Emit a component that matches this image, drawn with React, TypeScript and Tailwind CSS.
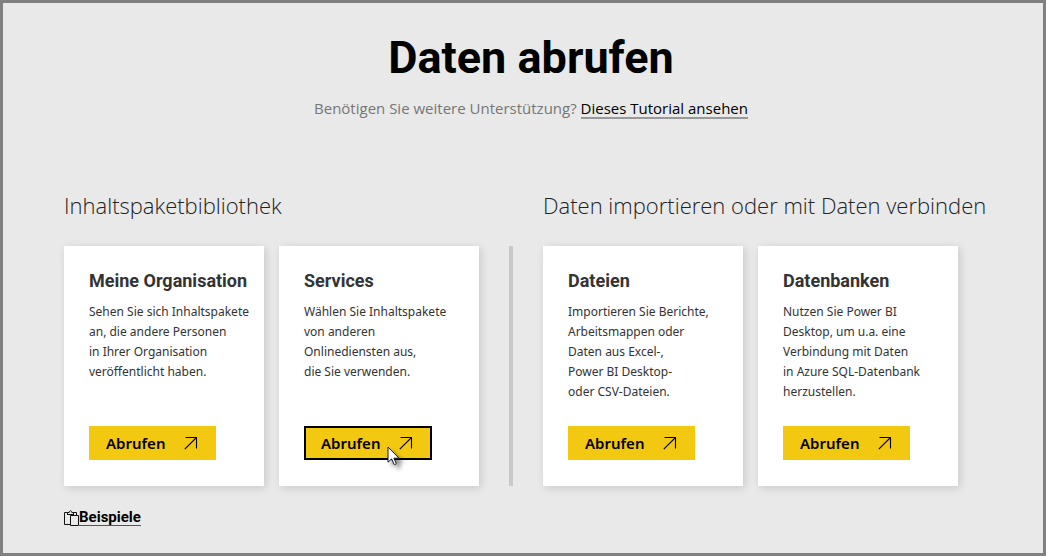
type CardData = {
  title: string;
  lines: string[];
  focused?: boolean;
};

const libraryCards: CardData[] = [
  {
    title: 'Meine Organisation',
    lines: ['Sehen Sie sich Inhaltspakete', 'an, die andere Personen', 'in Ihrer Organisation', 'veröffentlicht haben.'],
  },
  {
    title: 'Services',
    lines: ['Wählen Sie Inhaltspakete', 'von anderen', 'Onlinediensten aus,', 'die Sie verwenden.'],
    focused: true,
  },
];

const importCards: CardData[] = [
  {
    title: 'Dateien',
    lines: ['Importieren Sie Berichte,', 'Arbeitsmappen oder', 'Daten aus Excel-,', 'Power BI Desktop-', 'oder CSV-Dateien.'],
  },
  {
    title: 'Datenbanken',
    lines: ['Nutzen Sie Power BI', 'Desktop, um u.a. eine', 'Verbindung mit Daten', 'in Azure SQL-Datenbank', 'herzustellen.'],
  },
];

function ArrowIcon() {
  return (
    <svg width="14" height="14" viewBox="0 0 14 14" fill="none" stroke="#000" strokeWidth="1.1" aria-hidden="true">
      <path d="M1.5 1.5H12.5V12.5M12.5 1.5L0.8 13.2" />
    </svg>
  );
}

function ClipboardIcon() {
  return (
    <svg width="15" height="16" viewBox="0 0 15 16" fill="none" stroke="#111" aria-hidden="true">
      <path d="M6.5 14.5H0.5V2.5H3.5M9.5 2.5H12.5V5.5" />
      <path d="M3 4.5H10M3.5 4V2.5H5.2C5.2 0.2 7.8 0.2 7.8 2.5H9.5V4" />
      <path d="M6.5 5.5H14.5V15.5H6.5Z" />
    </svg>
  );
}

function Pointer() {
  return (
    <svg
      className="pointer-events-none absolute top-5 left-[83px] drop-shadow-[4px_4px_2px_rgba(0,0,0,0.45)]"
      width="14"
      height="20"
      viewBox="0 0 14 20"
      aria-hidden="true"
    >
      <path
        d="M1 1V16.2L4.6 12.9L7 18.2C7.4 19 9.6 18.1 9.2 17.2L6.9 12.2H12Z"
        fill="#fff"
        stroke="#15152b"
        strokeWidth="1"
        strokeLinejoin="round"
      />
    </svg>
  );
}

function Card({ title, lines, focused }: CardData) {
  return (
    <article className="flex min-h-60 w-50 flex-col items-start bg-white pt-[23px] pb-[26px] pl-[25px] shadow-[2px_2px_8px_rgba(0,0,0,0.14)]">
      <h3 className="font-[Roboto,sans-serif] text-lg leading-6 font-bold whitespace-nowrap text-[#333]">{title}</h3>
      <p className="mt-[9px] font-['Noto_Sans',sans-serif] text-[12px] leading-5 whitespace-nowrap text-[#333]">
        {lines.map((line) => (
          <span key={line} className="block">
            {line}
          </span>
        ))}
      </p>
      <div className="relative mt-auto">
        <button
          type="button"
          className={
            focused
              ? 'flex h-[34px] w-32 items-center justify-between border-2 border-black bg-[#f2c811] pr-[17px] pl-[15px]'
              : 'flex h-[34px] w-[127px] items-center justify-between bg-[#f2c811] pr-[18px] pl-[17px]'
          }
        >
          <span className="font-['Noto_Sans',sans-serif] text-[15px] leading-5 font-semibold text-black">Abrufen</span>
          <ArrowIcon />
        </button>
        {focused && <Pointer />}
      </div>
    </article>
  );
}

function Section({ title, cards }: { title: string; cards: CardData[] }) {
  return (
    <section>
      <h2 className="h-9 w-0 font-['Open_Sans',sans-serif] text-[22px] leading-9 font-light whitespace-nowrap text-[#222]">
        {title}
      </h2>
      <div className="mt-[23px] flex gap-[15px]">
        {cards.map((card) => (
          <Card key={card.title} {...card} />
        ))}
      </div>
    </section>
  );
}

export default function App() {
  return (
    <div className="min-h-screen border-3 border-[#808080] bg-[#e9e9e9] pb-4">
      <header className="pt-[29px] pl-4 text-center">
        <h1 className="font-[Roboto,sans-serif] text-[45px] leading-[52px] font-bold text-black">Daten abrufen</h1>
        <p className="mt-3 font-['Open_Sans',sans-serif] text-[15px] leading-6 text-[#767676]">
          Benötigen Sie weitere Unterstützung?{' '}
          <a href="#tutorial" className="inline-block border-b-2 border-[#999] leading-[18px] text-black">
            Dieses Tutorial ansehen
          </a>
        </p>
      </header>
      <main className="mt-[67px] px-[61px]">
        <div className="flex items-end">
          <Section title="Inhaltspaketbibliothek" cards={libraryCards} />
          <div className="mx-[30px] h-60 w-1 shrink-0 bg-[#c8c8c8]" />
          <Section title="Daten importieren oder mit Daten verbinden" cards={importCards} />
        </div>
        <a href="#beispiele" className="mt-[23px] inline-flex items-center text-black">
          <ClipboardIcon />
          <span className="border-b border-[#555] font-[Roboto,sans-serif] text-[15px] leading-4 font-bold">Beispiele</span>
        </a>
      </main>
    </div>
  );
}
